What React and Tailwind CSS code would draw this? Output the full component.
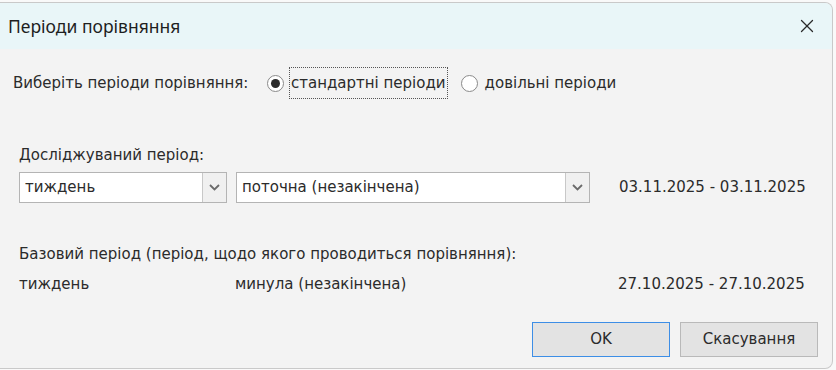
import { X } from "lucide-react";

const body = { fontFamily: '"DejaVu Sans", Tahoma, sans-serif' };

const Combo = ({ value, width }) => (
  <div className={`flex h-[31px] ${width} border border-[#b4b4b4] bg-white`}>
    <div className="flex-1 flex items-center pl-[5px] text-[15px] text-[#2b2b2b]">{value}</div>
    <div className="w-[24px] flex items-center justify-center border-l border-[#c8c8c8] bg-[#f0f0f0]">
      <svg width="11" height="7" viewBox="0 0 11 7">
        <path d="M1 1 L5.5 5.5 L10 1" fill="none" stroke="#6a6a6a" strokeWidth="1.8" />
      </svg>
    </div>
  </div>
);

const Radio = ({ checked, label, focused }) => (
  <div className="flex items-center gap-[6px]">
    <div className="w-[17px] h-[17px] rounded-full border border-[#8a8a8a] bg-white flex items-center justify-center">
      {checked && <div className="w-[9px] h-[9px] rounded-full bg-[#2a2a2a]" />}
    </div>
    <span
      className={`text-[15px] text-[#2b2b2b] px-[1px] py-[4px] ${
        focused ? "outline-1 outline-dotted outline-[#555]" : ""
      }`}
    >
      {label}
    </span>
  </div>
);

export default function App() {
  return (
    <div className="w-[836px] h-[370px] bg-[#f9f9f9] pt-[2px]">
      <div className="w-[833px] h-[367px] flex flex-col rounded-tr-[8px] rounded-br-[8px] border-r border-t border-b border-[#c9c9c9] overflow-hidden bg-[#f3f3f3]">
        {/* title bar */}
        <div
          className="h-[46px] flex items-center justify-between bg-[#e9f6f8] pl-[8px] pr-[14px]"
          style={{ fontFamily: '"Noto Sans", "Open Sans", sans-serif' }}
        >
          <span className="text-[17.5px] text-[#1f1f1f]">Періоди порівняння</span>
          <X className="w-[22px] h-[22px] text-[#2a2a2a]" strokeWidth={1.4} />
        </div>

        <div className="flex-1 flex flex-col px-[13px]" style={body}>
          <div className="flex items-center mt-[20px] h-[28px]">
            <span className="text-[15px] text-[#2b2b2b] w-[254px]">Виберіть періоди порівняння:</span>
            <div className="flex items-center gap-[14px]">
              <Radio checked focused label="стандартні періоди" />
              <Radio label="довільні періоди" />
            </div>
          </div>

          <div className="pl-[6px] mt-[47px] text-[15px] text-[#2b2b2b]">Досліджуваний період:</div>
          <div className="pl-[6px] mt-[5px] flex items-center">
            <Combo value="тиждень" width="w-[208px]" />
            <div className="ml-[9px]">
              <Combo value="поточна (незакінчена)" width="w-[354px]" />
            </div>
            <span className="ml-[29px] text-[15px] text-[#2b2b2b]">03.11.2025 - 03.11.2025</span>
          </div>

          <div className="pl-[6px] mt-[40px] text-[15px] text-[#2b2b2b]">
            Базовий період (період, щодо якого проводиться порівняння):
          </div>
          <div className="pl-[6px] mt-[8px] flex items-center text-[15px] text-[#2b2b2b]">
            <span className="w-[216px]">тиждень</span>
            <span className="w-[383px]">минула (незакінчена)</span>
            <span>27.10.2025 - 27.10.2025</span>
          </div>

          <div className="mt-[26px] flex justify-end gap-[10px] pr-[1px]">
            <button className="w-[138px] h-[35px] border border-[#3d8ee6] bg-[#e3e3e3] text-[15px] text-[#2b2b2b]">
              OK
            </button>
            <button className="w-[138px] h-[35px] border border-[#b9b9b9] bg-[#e3e3e3] text-[15px] text-[#2b2b2b]">
              Скасування
            </button>
          </div>
        </div>
      </div>
    </div>
  );
}
